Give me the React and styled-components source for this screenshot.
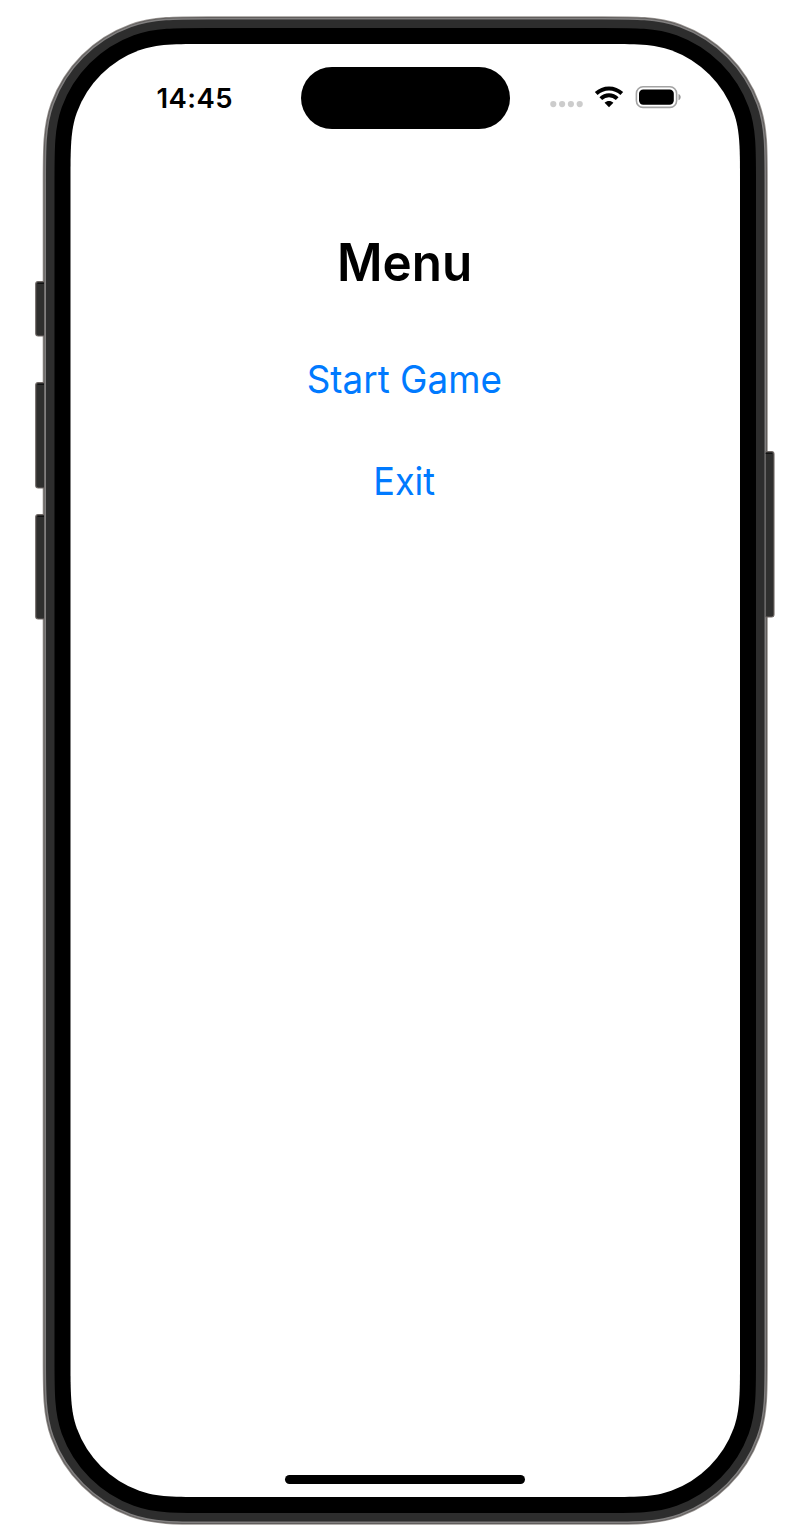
import React from "react";
import styled, { createGlobalStyle } from "styled-components";

const GlobalStyle = createGlobalStyle`
  * { box-sizing: border-box; }
  body {
    margin: 0;
    background: #fff;
    font-family: Inter, "Liberation Sans", sans-serif;
    color: #000;
  }
`;

const Stage = styled.main`
  position: relative;
  width: 810px;
  height: 1540px;
  padding: 44px 70px 43px 70.5px;
  overflow: hidden;
`;

const DeviceArt = styled.svg`
  position: absolute;
  inset: 0;
  width: 810px;
  height: 1540px;
`;

const Screen = styled.div`
  position: relative;
  display: flex;
  flex-direction: column;
  align-items: center;
  width: 669.5px;
  height: 1453px;
`;

const StatusBar = styled.header`
  display: grid;
  grid-template-columns: 1fr 209px 1fr;
  align-items: center;
  width: 100%;
  height: 62px;
  margin-top: 23px;
`;

const Clock = styled.time`
  padding: 0 0 0 86px;
  font-size: 27.5px;
  line-height: 34px;
  font-weight: 560;
  letter-spacing: 0.4px;
`;

const Island = styled.div`
  height: 61.5px;
  border-radius: 31px;
  background: #000;
`;

const Indicators = styled.div`
  display: flex;
  align-items: center;
  padding-left: 40px;
`;

const Menu = styled.section`
  display: flex;
  flex-direction: column;
  align-items: center;
  padding-top: 101.5px;
`;

const Title = styled.h1`
  margin: 0 0 62px;
  padding-right: 1px;
  font-size: 51.6px;
  line-height: 62px;
  font-weight: 590;
  transform: scaleX(0.957);
`;

const MenuButton = styled.button`
  margin: 0 0 54px;
  padding: 0 2px 0 0;
  border: 0;
  background: none;
  color: #007aff;
  font: 400 38.6px/48px Inter, "Liberation Sans", sans-serif;
  transform: scaleX(${(p) => p.$condense});
  white-space: nowrap;
  cursor: pointer;
`;

const HomeIndicator = styled.div`
  width: 240px;
  height: 9px;
  margin-top: auto;
  margin-bottom: 13px;
  border-radius: 5px;
  background: #000;
`;

// Rounded rectangle whose arcs ease into the straight sides.
function screenOutline(x0, y0, x1, y1, r) {
  const a = 1.32 * r;
  const b = 1.0 * r;
  const c = 0.8237 * r;
  const d = 0.658 * r;
  const e = 0.0603 * r;
  return [
    `M${x0 + a} ${y0}H${x1 - a}`,
    `C${x1 - b} ${y0} ${x1 - c} ${y0} ${x1 - d} ${y0 + e}`,
    `A${r} ${r} 0 0 1 ${x1 - e} ${y0 + d}`,
    `C${x1} ${y0 + c} ${x1} ${y0 + b} ${x1} ${y0 + a}V${y1 - a}`,
    `C${x1} ${y1 - b} ${x1} ${y1 - c} ${x1 - e} ${y1 - d}`,
    `A${r} ${r} 0 0 1 ${x1 - d} ${y1 - e}`,
    `C${x1 - c} ${y1} ${x1 - b} ${y1} ${x1 - a} ${y1}H${x0 + a}`,
    `C${x0 + b} ${y1} ${x0 + c} ${y1} ${x0 + d} ${y1 - e}`,
    `A${r} ${r} 0 0 1 ${x0 + e} ${y1 - d}`,
    `C${x0} ${y1 - c} ${x0} ${y1 - b} ${x0} ${y1 - a}V${y0 + a}`,
    `C${x0} ${y0 + b} ${x0} ${y0 + c} ${x0 + e} ${y0 + d}`,
    `A${r} ${r} 0 0 1 ${x0 + d} ${y0 + e}`,
    `C${x0 + c} ${y0} ${x0 + b} ${y0} ${x0 + a} ${y0}Z`,
  ].join("");
}

const OUTLINE = screenOutline(70.5, 44, 740, 1497, 104.5);

const SIDE_KEYS = [
  { x: 44, y: 281, h: 55.5, dir: -1 },
  { x: 44, y: 382, h: 106.5, dir: -1 },
  { x: 44, y: 514, h: 105.5, dir: -1 },
  { x: 765.7, y: 451, h: 166.5, dir: 1 },
];

function SideKey({ x, y, h, dir }) {
  const edge = x + dir * 8.3;
  const shape = `M${x} ${y + 0.5}H${edge - dir * 2.5}Q${edge} ${y + 0.5} ${edge} ${y + 3}V${y + h - 3}Q${edge} ${y + h - 0.5} ${edge - dir * 2.5} ${y + h - 0.5}H${x}`;
  return (
    <g>
      <path d={shape} fill="#2f2f2e" stroke="#706966" strokeWidth="1.1" />
      <path d={`M${x} ${y + 2.5}h${dir * 6.5}`} stroke="#111" strokeWidth="1" />
    </g>
  );
}

function Device() {
  return (
    <DeviceArt viewBox="0 0 810 1540" aria-hidden="true">
      <g fill="none">
        <path d={OUTLINE} stroke="#9a9693" strokeWidth="55.6" />
        <path d={OUTLINE} stroke="#615e5d" strokeWidth="54" />
        <path d={OUTLINE} stroke="#817f7f" strokeWidth="52" />
        <path d={OUTLINE} stroke="#2d2d2d" strokeWidth="49" />
        <path d={OUTLINE} stroke="#000" strokeWidth="32" />
      </g>
      <path d={OUTLINE} fill="#fff" />
      {SIDE_KEYS.map((k) => (
        <SideKey key={k.y} {...k} />
      ))}
    </DeviceArt>
  );
}

function StatusIcons() {
  return (
    <svg width="140" height="30" viewBox="0 0 140 30" aria-hidden="true">
      <g fill="#ccc">
        <circle cx="3.3" cy="21.1" r="3.1" />
        <circle cx="12.1" cy="21.1" r="3.1" />
        <circle cx="20.9" cy="21.1" r="3.1" />
        <circle cx="29.7" cy="21.1" r="3.1" />
      </g>
      <g fill="none" stroke="#000" strokeWidth="4">
        <path d="M46.2 10.5C53.5 3.7 64.5 3.7 71.8 10.5" />
        <path d="M50.8 15.6C55.5 11.2 62.5 11.2 67.2 15.6" />
      </g>
      <path d="M59 24.2l-4.4-4.4c2.5-2.3 6.3-2.3 8.8 0z" fill="#000" />
      <rect x="86.4" y="3.8" width="40.2" height="20.6" rx="6.6" fill="none" stroke="#a3a3a3" strokeWidth="1.6" />
      <rect x="89" y="6.6" width="34.8" height="15.2" rx="4.2" fill="#000" />
      <path d="M128.5 11.1c2.9 1 2.9 5.2 0 6.2z" fill="#999" />
    </svg>
  );
}

export default function App() {
  return (
    <>
      <GlobalStyle />
      <Stage>
        <Device />
        <Screen>
          <StatusBar>
            <Clock>14:45</Clock>
            <Island />
            <Indicators>
              <StatusIcons />
            </Indicators>
          </StatusBar>
          <Menu>
            <Title>Menu</Title>
            <MenuButton $condense={0.954}>Start Game</MenuButton>
            <MenuButton $condense={0.935}>Exit</MenuButton>
          </Menu>
          <HomeIndicator />
        </Screen>
      </Stage>
    </>
  );
}
